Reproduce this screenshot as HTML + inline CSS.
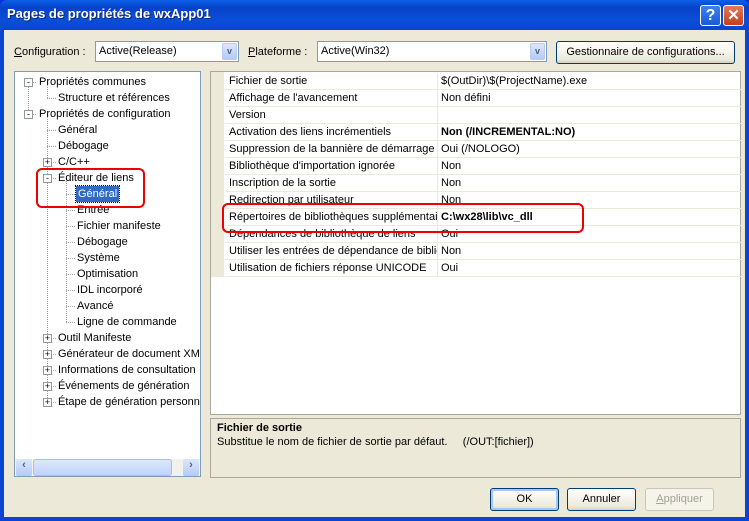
<!DOCTYPE html><html><head><style>
*{margin:0;padding:0;box-sizing:border-box}
body{width:749px;height:521px;overflow:hidden;font:11px "Liberation Sans",Tahoma,sans-serif;color:#000;background:#0831d9}
.win{position:absolute;left:0;top:0;width:749px;height:521px;background:linear-gradient(#0a5fe8,#0842c8 8px,#0a4fd8 20px,#0845d0 30px);border-radius:7px 7px 0 0}
.title{position:absolute;left:7px;top:6px;color:#fff;font-size:13px;font-weight:bold;text-shadow:1px 1px #0a2a80}
.body{position:absolute;left:4px;top:30px;width:741px;height:487px;background:#ece9d8}
.abs{position:absolute}
.tb{position:absolute;top:5px;width:21px;height:21px;border:1px solid #fff;border-radius:3px}
.combo{position:absolute;top:41px;height:21px;border:1px solid #7f9db9;background:#fff;padding:3px 3px}
.arr{position:absolute;right:1px;top:1px;width:15px;height:17px;background:linear-gradient(#dce7fc,#b5c9f5);border:1px solid #b8cbf3;border-radius:2px;color:#4d6185;font-size:9px;text-align:center;line-height:15px;font-weight:bold}
.btn{position:absolute;height:23px;border:1px solid #003c74;border-radius:3px;background:linear-gradient(#fff,#ece9d8 85%,#d6d0c5);text-align:center;line-height:21px}
.tree{position:absolute;left:14px;top:71px;width:187px;height:406px;border:1px solid #7f9db9;background:#fff;overflow:hidden}
.ti{position:absolute;white-space:nowrap;height:16px;line-height:16px}
.pm{position:absolute;width:9px;height:9px;border:1px solid #919b9c;background:#fff;font-size:9px;line-height:7px;text-align:center;color:#000;z-index:2}
.vl{position:absolute;border-left:1px dotted #a0a0a0;width:0}
.hl{position:absolute;border-top:1px dotted #a0a0a0;height:0}
.grid{position:absolute;left:210px;top:71px;width:531px;height:344px;border:1px solid #aca899;background:#fff}
.row{position:absolute;left:14px;width:516px;height:17px;border-bottom:1px solid #ece9d8;line-height:16px;white-space:nowrap}
.row .k{position:absolute;left:4px;width:208px;overflow:hidden}
.row .v{position:absolute;left:212px;padding-left:3px;border-left:1px solid #ece9d8;height:16px;width:304px}
.desc{position:absolute;left:210px;top:418px;width:531px;height:60px;border:1px solid #aca899;background:#ece9d8;padding:3px 6px}
.red{position:absolute;border:2px solid #e00;border-radius:6px}
</style></head><body><div class="win">
<div class="title">Pages de propriétés de wxApp01</div>
<div class="tb" style="left:700px;background:linear-gradient(#3c81f3,#1b5ad8);color:#fff;font:bold 16px 'Liberation Sans';text-align:center;line-height:19px">?</div>
<div class="tb" style="left:723px;background:linear-gradient(#e37a5c,#c4401a);color:#fff;font:bold 15px 'Liberation Sans';text-align:center;line-height:19px">✕</div>
<div class="body"></div>
<div class="abs" style="left:14px;top:46px"><u>C</u>onfiguration :</div>
<div class="combo" style="left:95px;width:144px">Active(Release)<div class="arr">v</div></div>
<div class="abs" style="left:248px;top:46px"><u>P</u>lateforme :</div>
<div class="combo" style="left:317px;width:230px">Active(Win32)<div class="arr">v</div></div>
<div class="btn" style="left:556px;top:41px;width:179px">Gestionnaire de configurations...</div>

<div class="tree">
<div class="vl" style="left:13px;top:10px;height:32px"></div>
<div class="hl" style="left:13px;top:10px;width:8px"></div>
<div class="hl" style="left:13px;top:42px;width:8px"></div>
<div class="vl" style="left:32px;top:10px;height:16px"></div>
<div class="hl" style="left:32px;top:26px;width:9px"></div>
<div class="vl" style="left:32px;top:42px;height:288px"></div>
<div class="hl" style="left:32px;top:58px;width:9px"></div>
<div class="hl" style="left:32px;top:74px;width:9px"></div>
<div class="hl" style="left:32px;top:90px;width:9px"></div>
<div class="hl" style="left:32px;top:106px;width:9px"></div>
<div class="hl" style="left:32px;top:266px;width:9px"></div>
<div class="hl" style="left:32px;top:282px;width:9px"></div>
<div class="hl" style="left:32px;top:298px;width:9px"></div>
<div class="hl" style="left:32px;top:314px;width:9px"></div>
<div class="hl" style="left:32px;top:330px;width:9px"></div>
<div class="vl" style="left:51px;top:106px;height:144px"></div>
<div class="hl" style="left:51px;top:122px;width:9px"></div>
<div class="hl" style="left:51px;top:138px;width:9px"></div>
<div class="hl" style="left:51px;top:154px;width:9px"></div>
<div class="hl" style="left:51px;top:170px;width:9px"></div>
<div class="hl" style="left:51px;top:186px;width:9px"></div>
<div class="hl" style="left:51px;top:202px;width:9px"></div>
<div class="hl" style="left:51px;top:218px;width:9px"></div>
<div class="hl" style="left:51px;top:234px;width:9px"></div>
<div class="hl" style="left:51px;top:250px;width:9px"></div>
<div class="ti" style="left:24px;top:2px">Propriétés communes</div><div class="pm" style="left:9px;top:6px">-</div>
<div class="ti" style="left:43px;top:18px">Structure et références</div>
<div class="ti" style="left:24px;top:34px">Propriétés de configuration</div><div class="pm" style="left:9px;top:38px">-</div>
<div class="ti" style="left:43px;top:50px">Général</div>
<div class="ti" style="left:43px;top:66px">Débogage</div>
<div class="ti" style="left:43px;top:82px">C/C++</div><div class="pm" style="left:28px;top:86px">+</div>
<div class="ti" style="left:43px;top:98px">Éditeur de liens</div><div class="pm" style="left:28px;top:102px">-</div>
<div class="ti" style="left:61px;top:114px;background:#316ac5;color:#fff;padding:0 2px;outline:1px dotted #000">Général</div>
<div class="ti" style="left:62px;top:130px">Entrée</div>
<div class="ti" style="left:62px;top:146px">Fichier manifeste</div>
<div class="ti" style="left:62px;top:162px">Débogage</div>
<div class="ti" style="left:62px;top:178px">Système</div>
<div class="ti" style="left:62px;top:194px">Optimisation</div>
<div class="ti" style="left:62px;top:210px">IDL incorporé</div>
<div class="ti" style="left:62px;top:226px">Avancé</div>
<div class="ti" style="left:62px;top:242px">Ligne de commande</div>
<div class="ti" style="left:43px;top:258px">Outil Manifeste</div><div class="pm" style="left:28px;top:262px">+</div>
<div class="ti" style="left:43px;top:274px">Générateur de document XML</div><div class="pm" style="left:28px;top:278px">+</div>
<div class="ti" style="left:43px;top:290px">Informations de consultation</div><div class="pm" style="left:28px;top:294px">+</div>
<div class="ti" style="left:43px;top:306px">Événements de génération</div><div class="pm" style="left:28px;top:310px">+</div>
<div class="ti" style="left:43px;top:322px">Étape de génération personnalisée</div><div class="pm" style="left:28px;top:326px">+</div>
<div class="abs" style="left:0;top:387px;width:185px;height:17px;background:#f3f1ec">
<div class="abs" style="left:1px;top:0;width:16px;height:17px;background:linear-gradient(#dce7fc,#b5c9f5);border-radius:2px;color:#4d6185;text-align:center;font-weight:bold">‹</div>
<div class="abs" style="left:18px;top:0;width:139px;height:17px;background:linear-gradient(#dce7fc,#c1d3fb);border:1px solid #a8bfee;border-radius:3px"></div>
<div class="abs" style="left:168px;top:0;width:16px;height:17px;background:linear-gradient(#dce7fc,#b5c9f5);border-radius:2px;color:#4d6185;text-align:center;font-weight:bold">›</div>
</div>
</div>

<div class="grid">
<div class="row" style="top:1px"><span class="k">Fichier de sortie</span><span class="v">$(OutDir)\$(ProjectName).exe</span></div>
<div class="row" style="top:18px"><span class="k">Affichage de l'avancement</span><span class="v">Non défini</span></div>
<div class="row" style="top:35px"><span class="k">Version</span><span class="v"></span></div>
<div class="row" style="top:52px"><span class="k">Activation des liens incrémentiels</span><span class="v"><b>Non (/INCREMENTAL:NO)</b></span></div>
<div class="row" style="top:69px"><span class="k">Suppression de la bannière de démarrage</span><span class="v">Oui (/NOLOGO)</span></div>
<div class="row" style="top:86px"><span class="k">Bibliothèque d'importation ignorée</span><span class="v">Non</span></div>
<div class="row" style="top:103px"><span class="k">Inscription de la sortie</span><span class="v">Non</span></div>
<div class="row" style="top:120px"><span class="k">Redirection par utilisateur</span><span class="v">Non</span></div>
<div class="row" style="top:137px"><span class="k">Répertoires de bibliothèques supplémentaires</span><span class="v"><b>C:\wx28\lib\vc_dll</b></span></div>
<div class="row" style="top:154px"><span class="k">Dépendances de bibliothèque de liens</span><span class="v">Oui</span></div>
<div class="row" style="top:171px"><span class="k">Utiliser les entrées de dépendance de bibliothèque</span><span class="v">Non</span></div>
<div class="row" style="top:188px"><span class="k">Utilisation de fichiers réponse UNICODE</span><span class="v">Oui</span></div>
<div class="abs" style="left:0;top:0;width:13px;height:205px;background:#ece9d8"></div>
</div>

<div class="desc"><b>Fichier de sortie</b><br><span style="line-height:17px">Substitue le nom de fichier de sortie par défaut.&nbsp;&nbsp;&nbsp;&nbsp;&nbsp;(/OUT:[fichier])</span></div>

<div class="btn" style="left:490px;top:488px;width:69px;box-shadow:inset 0 0 0 2px #a9c5f2">OK</div>
<div class="btn" style="left:567px;top:488px;width:69px">Annuler</div>
<div class="btn" style="left:645px;top:488px;width:69px;border-color:#c9c7ba;color:#a1a192;background:#f5f4ea"><u>A</u>ppliquer</div>

<div class="red" style="left:36px;top:168px;width:109px;height:40px"></div>
<div class="red" style="left:222px;top:203px;width:362px;height:30px"></div>
</div></body></html>
